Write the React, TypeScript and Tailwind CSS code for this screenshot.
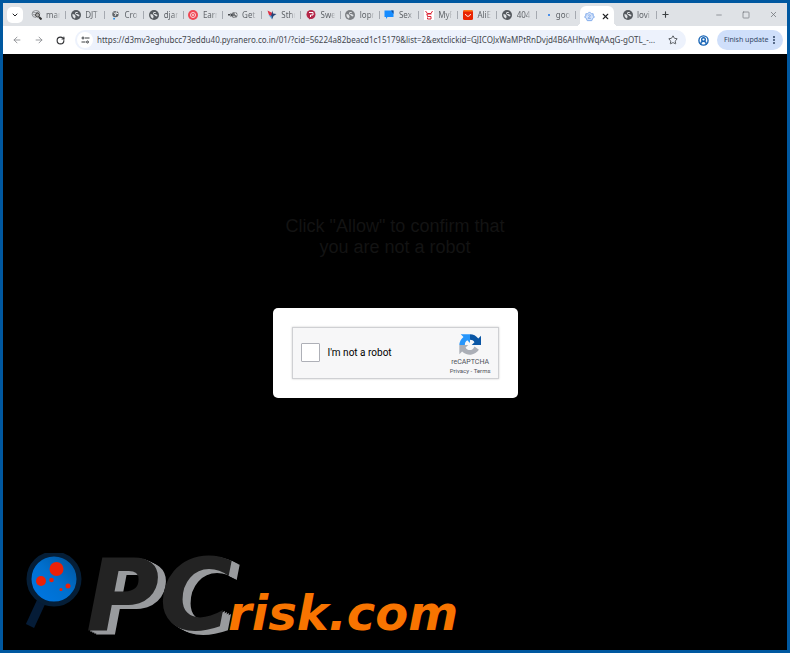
import type { ReactNode } from "react";
import { ArrowLeft, ArrowRight, ChevronDown, CircleUserRound, EllipsisVertical, Minus, Plus, RotateCw, Square, Star, X } from "lucide-react";

function Globe({ color = "#55595e" }: { color?: string }) {
  return (
    <svg viewBox="0 0 20 20" className="size-[10px]">
      <circle cx="10" cy="10" r="10" fill={color} />
      <path d="M3 8l4 1 2 3v2l-1 3c-3-1-6-4-5-9zM9 4h5l-1 2h-3v2h3l4 2-1 3-3-1-2-2-3-2z" fill="#dfe1e4" />
    </svg>
  );
}

function SearchGlobe() {
  return (
    <svg viewBox="0 0 22 22" className="size-[11px]">
      <path d="M10 17a8 7 0 1 1 8-8M3 8c4-3 7 2 13-3M3 12c5-3 5 1 6 2" fill="none" stroke="#777a7e" strokeWidth="1.5" />
      <circle cx="13" cy="12" r="4" fill="#aaaaaa" stroke="#444444" strokeWidth="2" />
      <path d="M16 16l5 5" stroke="#333333" strokeWidth="4" />
    </svg>
  );
}

function PinGlobe() {
  return (
    <svg viewBox="0 0 22 22" className="size-[10px]">
      <circle cx="12" cy="9" r="7" fill="#5f6368" />
      <path d="M8 6l5 3-2 4M14 3l-1 4 5 1" stroke="#ffffff" strokeWidth="2" fill="none" />
      <circle cx="9" cy="19" r="2" fill="#1686e8" />
    </svg>
  );
}

function RedTarget() {
  return (
    <svg viewBox="0 0 20 20" className="size-[10px]">
      <circle cx="10" cy="10" r="10" fill="#ef4754" />
      <circle cx="10" cy="10" r="5" fill="none" stroke="#fbd5d8" strokeWidth="2" />
      <circle cx="10" cy="10" r="2" fill="#fbd5d8" />
    </svg>
  );
}

function ArrowGlobe() {
  return (
    <svg viewBox="0 0 20 20" className="size-[10px]">
      <circle cx="13" cy="10" r="6" fill="#74777b" />
      <path d="M0 8h4v3H0zM5 6l5 4-5 4z" fill="#44474b" />
      <path d="M14 5l1 4 3 1M11 12l3 3" stroke="#ffffff" strokeWidth="2" fill="none" />
    </svg>
  );
}

function Bird() {
  return (
    <svg viewBox="0 0 20 20" className="size-[10px]">
      <path d="M1 1l10 5-2 7-5-3z" fill="#df3042" />
      <path d="M11 1l1 6 7 1-6 4-3 7-2-7z" fill="#254477" />
      <path d="M3 10l6 2 1 6z" fill="#4b9ee1" />
    </svg>
  );
}

function Crimson() {
  return (
    <svg viewBox="0 0 20 20" className="size-[10px]">
      <circle cx="10" cy="9" r="9" fill="#b42749" />
      <path d="M6 13v6l6-3z" fill="#b42749" />
      <path d="M6 5h8v5H9v4" fill="none" stroke="#ffffff" strokeWidth="2" />
    </svg>
  );
}

function ChatBubble() {
  return (
    <svg viewBox="0 0 20 20" className="size-[10px]">
      <path d="M1 1h18v13H7l-3 4v-4H1z" fill="#168cff" />
      <path d="M14 1h5v7z" fill="#144b91" />
    </svg>
  );
}

function Shopper() {
  return (
    <svg viewBox="0 0 20 20" className="size-[10px] bg-white">
      <path d="M3 2l4 5h7l3-5M5 8h10M6 8l1 5h7v5H7v-3" fill="none" stroke="#dc2335" strokeWidth="2" />
    </svg>
  );
}

function ShopBag() {
  return (
    <svg viewBox="0 0 20 20" className="size-[10px]">
      <rect width="20" height="20" rx="3" fill="#e92400" />
      <path d="M3 0h14l3 3H0z" fill="#ff7a1a" />
      <path d="M5 8c1 6 9 6 10 0" fill="none" stroke="#ffffff" strokeWidth="2" />
    </svg>
  );
}

function LoadingDot() {
  return (
    <svg viewBox="0 0 10 10" className="size-[10px]">
      <circle cx="8" cy="5" r="1" fill="#1a73e8" />
    </svg>
  );
}

function Recaptcha({ className }: { className: string }) {
  return (
    <svg viewBox="0 0 64 64" className={className}>
      <path d="M64 32V5l-8 8A32 32 0 0 0 32 1v16c6 0 10 2 13 7l-8 8z" fill="#0a56a5" />
      <path d="M32 1H5l8 8A32 32 0 0 0 1 32h16c0-6 2-11 7-14l8 8z" fill="#2796fb" />
      <path d="M1 32v27l8-8a32 32 0 0 0 49-5L45 36c-4 13-20 14-26 3l8-7z" fill="#abafb7" />
    </svg>
  );
}

// pale outline version of the badge, used as the active tab's favicon
function RecaptchaOutline() {
  return (
    <svg viewBox="0 0 24 24" className="size-[11px]" fill="#d4e3fb" stroke="#7ba7ea" strokeWidth="2" strokeLinejoin="round">
      <path d="M12 2l4 4h4v5l3 2-4 3-2 5H7l-2-5-4-3 3-2V6h4z" />
      <path d="M9 10c2-3 6-1 5 1s-4 2-5 5h6" fill="none" />
    </svg>
  );
}

const tabs: { title: string; icon: ReactNode }[] = [
  { title: "mar", icon: <SearchGlobe /> },
  { title: "DJT", icon: <Globe /> },
  { title: "Cro", icon: <PinGlobe /> },
  { title: "djan", icon: <Globe /> },
  { title: "Earn", icon: <RedTarget /> },
  { title: "Get", icon: <ArrowGlobe /> },
  { title: "Sthr", icon: <Bird /> },
  { title: "Swe", icon: <Crimson /> },
  { title: "lopr", icon: <Globe color="#7c7f83" /> },
  { title: "Sex", icon: <ChatBubble /> },
  { title: "MyF", icon: <Shopper /> },
  { title: "AliE", icon: <ShopBag /> },
  { title: "404", icon: <Globe /> },
  { title: "goo", icon: <LoadingDot /> },
];

function Tab({ title, icon }: { title: string; icon: ReactNode }) {
  return (
    <button className="flex h-[22px] w-[39px] grow items-center text-[8px] text-[#5f6368]">
      <span className="flex w-[11px] shrink-0 justify-center">{icon}</span>
      <span className="ml-1 w-[18px] shrink-0 text-left whitespace-nowrap [mask-image:linear-gradient(90deg,#000_50%,transparent_80%)]">{title}</span>
      <span className="ml-px h-2 w-px bg-[#a5a9b0]" />
    </button>
  );
}

function TabStrip() {
  return (
    <div className="flex h-[23px] items-center bg-[#dfe2e6] pl-1">
      <button aria-label="Search tabs" className="mr-2 flex size-4 shrink-0 items-center justify-center rounded-[5px] bg-white text-[#202124]">
        <ChevronDown size={8} strokeWidth={3} />
      </button>
      <div className="flex w-[549px] shrink-0">
        {tabs.map((tab) => (
          <Tab key={tab.title} title={tab.title} icon={tab.icon} />
        ))}
      </div>
      <div className="relative flex h-[20px] w-[34px] shrink-0 items-center justify-between self-end rounded-t-[6px] bg-white px-1 before:absolute before:bottom-0 before:-left-1 before:size-1 before:bg-[radial-gradient(circle_at_0_0,transparent_4px,white_4px)] after:absolute after:-right-1 after:bottom-0 after:size-1 after:bg-[radial-gradient(circle_at_100%_0,transparent_4px,white_4px)]">
        <RecaptchaOutline />
        <button aria-label="Close tab" className="text-[#202124]">
          <X size={9} strokeWidth={3} />
        </button>
      </div>
      <div className="ml-2 flex">
        <Tab title="lovi" icon={<Globe />} />
      </div>
      <button aria-label="New tab" className="text-[#3c4043]">
        <Plus size={9} strokeWidth={3} />
      </button>
      <div className="ml-auto flex shrink-0 items-center gap-[19px] pr-[9px] text-[#6c7075]">
        <button aria-label="Minimize"><Minus size={8} /></button>
        <button aria-label="Maximize"><Square size={8} /></button>
        <button aria-label="Close"><X size={9} strokeWidth={2} /></button>
      </div>
    </div>
  );
}

function Toolbar() {
  return (
    <div className="flex h-7 items-center bg-white pr-1 pl-[9px]">
      <div className="flex shrink-0 items-center gap-3 text-[#85888d]">
        <button aria-label="Back"><ArrowLeft size={10} /></button>
        <button aria-label="Forward"><ArrowRight size={10} /></button>
        <button aria-label="Reload" className="text-[#303134]"><RotateCw size={9} strokeWidth={3} /></button>
      </div>
      <div className="ml-[10px] flex h-5 min-w-0 flex-1 items-center rounded-full bg-[#edf2fc] pr-2 pl-[2px]">
        <button aria-label="Site information" className="flex size-4 shrink-0 items-center justify-center rounded-full bg-white">
          <svg viewBox="0 0 18 16" className="h-2 w-[9px]" fill="none" stroke="#3c4043" strokeWidth="2">
            <circle cx="4" cy="4" r="2" />
            <path d="M8 4h9M1 12h8" />
            <circle cx="13" cy="12" r="2" />
          </svg>
        </button>
        <input
          aria-label="Address"
          className="ml-1 min-w-0 flex-1 bg-transparent text-[8px] text-[#44474c] outline-none"
          defaultValue="https://d3mv3eghubcc73eddu40.pyranero.co.in/01/?cid=56224a82beacd1c15179&list=2&extclickid=GJICOJxWaMPtRnDvjd4B6AHhvWqAAqG-gOTL_-..."
        />
        <button aria-label="Bookmark" className="ml-2 text-[#3c4043]"><Star size={10} /></button>
      </div>
      <button aria-label="Profile" className="mr-2 ml-3 text-[#1764b5]"><CircleUserRound size={11} strokeWidth={3} /></button>
      <button className="flex h-5 w-[66px] shrink-0 items-center justify-between rounded-full bg-[#cfdffa] pr-1 pl-[7px] text-[7px] whitespace-nowrap text-[#334766]">
        Finish update
        <EllipsisVertical size={10} strokeWidth={3} />
      </button>
    </div>
  );
}

function CaptchaCard() {
  return (
    <div className="mt-[50px] w-[245px] rounded-[5px] bg-white p-[19px]">
      <div className="flex h-[52px] items-center border border-[#cfd0d3] bg-[#f7f7f8] pr-[7px] pb-[2px] pl-2 font-[Roboto,sans-serif] shadow-[0_0_2px_#cccccc]">
        <input id="robot" type="checkbox" className="size-[19px] appearance-none rounded-[1px] border border-[#aeb0b7] bg-white" />
        <label htmlFor="robot" className="ml-2 text-[10px] text-black">I'm not a robot</label>
        <div className="ml-auto flex flex-col items-center pt-1 text-[#4e5158]">
          <Recaptcha className="size-[22px]" />
          <span className="mt-[2px] text-[7px] leading-[9px]">reCAPTCHA</span>
          <span className="text-[6px] leading-[7px] whitespace-nowrap">
            <a href="#privacy">Privacy</a> - <a href="#terms">Terms</a>
          </span>
        </div>
      </div>
    </div>
  );
}

function Magnifier() {
  return (
    <svg viewBox="0 0 60 80" className="mb-1 h-20 w-[60px] shrink-0">
      <defs>
        <linearGradient id="lens" x1="0" y1="1" x2="1" y2="0">
          <stop offset="0" stopColor="#0078e8" />
          <stop offset="0.5" stopColor="#0070cf" />
          <stop offset="1" stopColor="#004f94" />
        </linearGradient>
      </defs>
      <path d="M20 47L8 73" stroke="#051c37" strokeWidth="9" />
      <circle cx="32" cy="26" r="25" fill="url(#lens)" stroke="#051e37" strokeWidth="5" />
      <g fill="#eb2108">
        <circle cx="34.5" cy="16" r="7" />
        <circle cx="19" cy="28" r="5" />
        <circle cx="29.5" cy="27" r="2.3" />
        <circle cx="46" cy="33" r="2.5" />
        <circle cx="39" cy="36.5" r="1.5" />
      </g>
    </svg>
  );
}

function Brand() {
  return (
    <div className="mt-auto flex items-end self-start pb-[13px] pl-[19px] font-['DejaVu_Sans',sans-serif] font-bold italic">
      <Magnifier />
      <div className="flex items-baseline pl-1">
        <span className="w-[142px] text-[100px] leading-[80px] text-[#232323] [text-shadow:2px_1px_0_#999b9e,4px_2px_0_#999b9e,6px_3px_0_#999b9e,8px_4px_0_#999b9e]">PC</span>
        <span className="relative text-[48px] leading-[48px] text-[#f87400]">risk.com</span>
      </div>
    </div>
  );
}

export default function App() {
  return (
    <div className="flex min-h-screen flex-col border-[3px] border-[#0058a0] bg-black font-['Noto_Sans',sans-serif]">
      <TabStrip />
      <Toolbar />
      <main className="flex flex-1 flex-col items-center pt-[162px]">
        <h1 className="text-center font-['Liberation_Sans',Arial,sans-serif] text-[18px] leading-[21px] text-[#131313]">
          Click "Allow" to confirm that
          <br />
          you are not a robot
        </h1>
        <CaptchaCard />
        <Brand />
      </main>
    </div>
  );
}
